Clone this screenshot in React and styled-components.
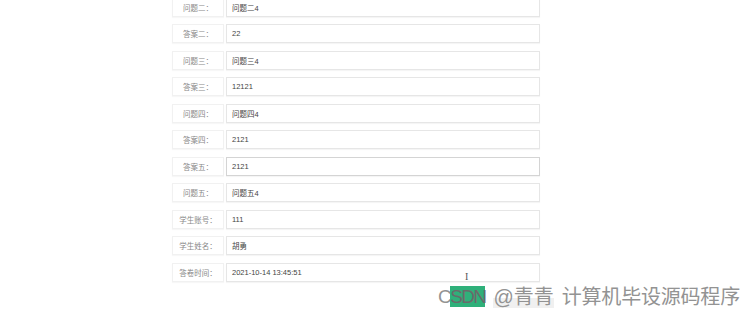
import React from "react";
import styled, { createGlobalStyle } from "styled-components";

const GlobalStyle = createGlobalStyle`
    html, body {
        margin: 0;
        padding: 0;
        background: #ffffff;
        font-family: "Liberation Sans", "Noto Sans CJK SC", sans-serif;
        overflow: hidden;
    }
`;

const Page = styled.div`
    width: 755px;
    height: 316px;
    position: relative;
    overflow: hidden;
`;

const Form = styled.div`
    display: flex;
    flex-direction: column;
    gap: 7.5px;
    margin-top: -2.5px;
    margin-left: 172px;
    width: 368px;
`;

const Row = styled.div`
    display: flex;
    height: 19px;
    gap: 2px;
`;

const Label = styled.div`
    width: 52px;
    box-sizing: border-box;
    border: 1px solid #f1f1f1;
    box-shadow: 0 1px 1px rgba(0, 0, 0, 0.03);
    display: flex;
    align-items: center;
    justify-content: center;
    font-size: 7.5px;
    color: #888;
    white-space: nowrap;
`;

const Value = styled.div`
    flex: 1;
    box-sizing: border-box;
    border: 1px solid ${(p) => (p.focus ? "#d4d4d4" : "#e6e6e6")};
    box-shadow: 0 1px 1px rgba(0, 0, 0, 0.04);
    display: flex;
    align-items: center;
    padding-left: 5px;
    font-size: 7.5px;
    color: #444;
`;

const Cursor = styled.div`
    position: absolute;
    left: 465px;
    top: 271px;
    font-family: "Liberation Serif", serif;
    font-size: 10px;
    color: #555;
`;

const Watermark = styled.div`
    position: absolute;
    left: 438px;
    top: 286px;
    display: flex;
    align-items: center;
    font-size: 20px;
    line-height: 22px;
    color: #939393;
    white-space: nowrap;
`;

const Brand = styled.span`
    letter-spacing: -1.6px;
    font-size: 19px;
`;

const Highlight = styled.span`
    background: #2fb07a;
    color: #6a6a6a;
`;

const Handle = styled.span`
    margin-left: 8px;
    background: linear-gradient(#ffffff 0, #ffffff 55%, #f0f0f0 55%);
`;

const Title = styled.span`
    margin-left: 8px;
    letter-spacing: -0.2px;
`;

const rows = [
    ["问题二：", "问题二4"],
    ["答案二：", "22"],
    ["问题三：", "问题三4"],
    ["答案三：", "12121"],
    ["问题四：", "问题四4"],
    ["答案四：", "2121"],
    ["答案五：", "2121", true],
    ["问题五：", "问题五4"],
    ["学生账号：", "111"],
    ["学生姓名：", "胡勇"],
    ["答卷时间：", "2021-10-14 13:45:51"],
];

export default function App() {
    return (
        <Page>
            <GlobalStyle />
            <Form>
                {rows.map(([label, value, focus]) => (
                    <Row key={label}>
                        <Label>{label}</Label>
                        <Value focus={focus}>{value}</Value>
                    </Row>
                ))}
            </Form>
            <Cursor>I</Cursor>
            <Watermark>
                <Brand>
                    C<Highlight>SDN</Highlight>
                </Brand>
                <Handle>@青青</Handle>
                <Title>计算机毕设源码程序</Title>
            </Watermark>
        </Page>
    );
}
